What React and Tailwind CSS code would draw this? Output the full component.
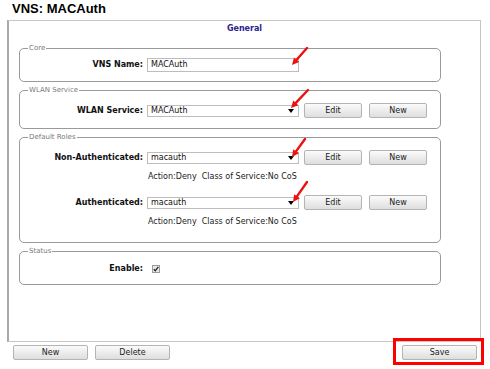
import React from "react";

function Arrow({ x1, y1, x2, y2 }) {
  const dx = x2 - x1;
  const dy = y2 - y1;
  const len = Math.hypot(dx, dy);
  const ux = dx / len;
  const uy = dy / len;
  const hl = 7;
  const hw = 3.5;
  const bx = x2 - ux * hl;
  const by = y2 - uy * hl;
  const p1 = `${x2},${y2}`;
  const p2 = `${bx - uy * hw},${by + ux * hw}`;
  const p3 = `${bx + uy * hw},${by - ux * hw}`;
  return (
    <g>
      <line x1={x1} y1={y1} x2={bx + ux} y2={by + uy} stroke="#ee1111" strokeWidth="2.4" strokeLinecap="round" />
      <polygon points={`${p1} ${p2} ${p3}`} fill="#ee1111" />
    </g>
  );
}

function Btn({ children, w = "w-[58px]" }) {
  return (
    <div
      className={`${w} h-[15px] flex items-center justify-center border border-[#b4b4b4] rounded-[2px] bg-gradient-to-b from-[#fbfbfb] to-[#dedede] text-[8px] leading-none text-[#222]`}
    >
      {children}
    </div>
  );
}

function Select({ value }) {
  return (
    <div className="relative w-[152px] h-[12px] border border-[#bdbdbd] bg-white flex items-center pl-[3px] text-[8px] leading-none text-[#111]">
      {value}
      <svg className="absolute right-[4px] top-[3px]" width="6" height="4" viewBox="0 0 6 4">
        <polygon points="0,0 6,0 3,4" fill="#000" />
      </svg>
    </div>
  );
}

function Legend({ children }) {
  return (
    <span className="absolute left-[8px] top-[-5px] px-[1px] bg-white text-[7px] leading-[9px] text-[#7a7a7a]">
      {children}
    </span>
  );
}

function Label({ children }) {
  return (
    <div className="w-[123px] text-right font-bold text-[8px] leading-none text-[#111]">{children}</div>
  );
}

function RoleRow({ label }) {
  return (
    <div className="flex items-center h-[15px]">
      <Label>{label}</Label>
      <div className="ml-[4px]">
        <Select value={label === "WLAN Service:" ? "MACAuth" : "macauth"} />
      </div>
      <div className="ml-[5px]">
        <Btn>Edit</Btn>
      </div>
      <div className="ml-[7px]">
        <Btn>New</Btn>
      </div>
    </div>
  );
}

function ActionLine({ className }) {
  return (
    <div className={`${className} h-[10px] pl-[128px] text-[8px] leading-[10px] text-[#222] whitespace-pre`}>
      {"Action:Deny  Class of Service:No CoS"}
    </div>
  );
}

export default function App() {
  return (
    <div className="relative w-[490px] h-[369px] bg-white overflow-hidden font-['DejaVu_Sans',sans-serif]">
      <div className="h-[20px] pl-[12px] pt-[1px] font-['Liberation_Sans',Arial,sans-serif] font-bold text-[13px] leading-[15px] text-black">
        VNS: MACAuth
      </div>

      <div className="ml-[7px] w-[474px] h-[322px] border border-[#c6c6c6] border-l-2 border-l-[#a9a9a9]">
        <div className="mt-[3px] h-[10px] text-center font-bold text-[8px] leading-[10px] text-[#2e2190]">General</div>

        <div className="mt-[14px] pl-[10px] flex flex-col gap-[8px]">
          <div className="relative w-[422px] border border-[#9a9a9a] rounded-[5px] pt-[9px] pb-[9px]">
            <Legend>Core</Legend>
            <div className="flex items-center gap-[4px] h-[14px]">
              <Label>VNS Name:</Label>
              <div className="w-[152px] h-[14px] border border-[#bdbdbd] bg-white flex items-center pl-[3px] text-[8px] leading-none text-[#111]">
                MACAuth
              </div>
            </div>
          </div>

          <div className="relative w-[422px] border border-[#9a9a9a] rounded-[5px] pt-[12px] pb-[10px]">
            <Legend>WLAN Service</Legend>
            <RoleRow label="WLAN Service:" />
          </div>

          <div className="relative w-[422px] border border-[#9a9a9a] rounded-[5px] pt-[12px] pb-[15px]">
            <Legend>Default Roles</Legend>
            <RoleRow label="Non-Authenticated:" />
            <ActionLine className="mt-[7px]" />
            <div className="mt-[13px]">
              <RoleRow label="Authenticated:" />
            </div>
            <ActionLine className="mt-[7px]" />
          </div>

          <div className="relative w-[422px] border border-[#9a9a9a] rounded-[5px] pt-[12px] pb-[10px]">
            <Legend>Status</Legend>
            <div className="flex items-center h-[10px]">
              <Label>Enable:</Label>
              <div className="ml-[9px] w-[8px] h-[8px] border border-[#9c9c9c] bg-[#e8e8e8] flex items-center justify-center">
                <svg width="6" height="6" viewBox="0 0 6 6">
                  <path d="M0.8 3.2 L2.3 4.8 L5.3 0.9" stroke="#222" strokeWidth="1.3" fill="none" />
                </svg>
              </div>
            </div>
          </div>
        </div>
      </div>

      <div className="mt-[3px] flex">
        <div className="ml-[13px]">
          <Btn w="w-[75px]">New</Btn>
        </div>
        <div className="ml-[7px]">
          <Btn w="w-[75px]">Delete</Btn>
        </div>
        <div className="ml-auto mr-[13px]">
          <Btn w="w-[75px]">Save</Btn>
        </div>
      </div>

      <div className="absolute left-[393px] top-[338px] w-[91px] h-[27px] border-[3px] border-[#ff0000]" />

      <svg className="absolute left-0 top-0 pointer-events-none" width="490" height="369">
        <Arrow x1={307} y1={48} x2={292} y2={65} />
        <Arrow x1={308} y1={90} x2={291} y2={108} />
        <Arrow x1={305} y1={139} x2={292} y2={157} />
        <Arrow x1={307} y1={182} x2={293} y2={202} />
      </svg>
    </div>
  );
}
